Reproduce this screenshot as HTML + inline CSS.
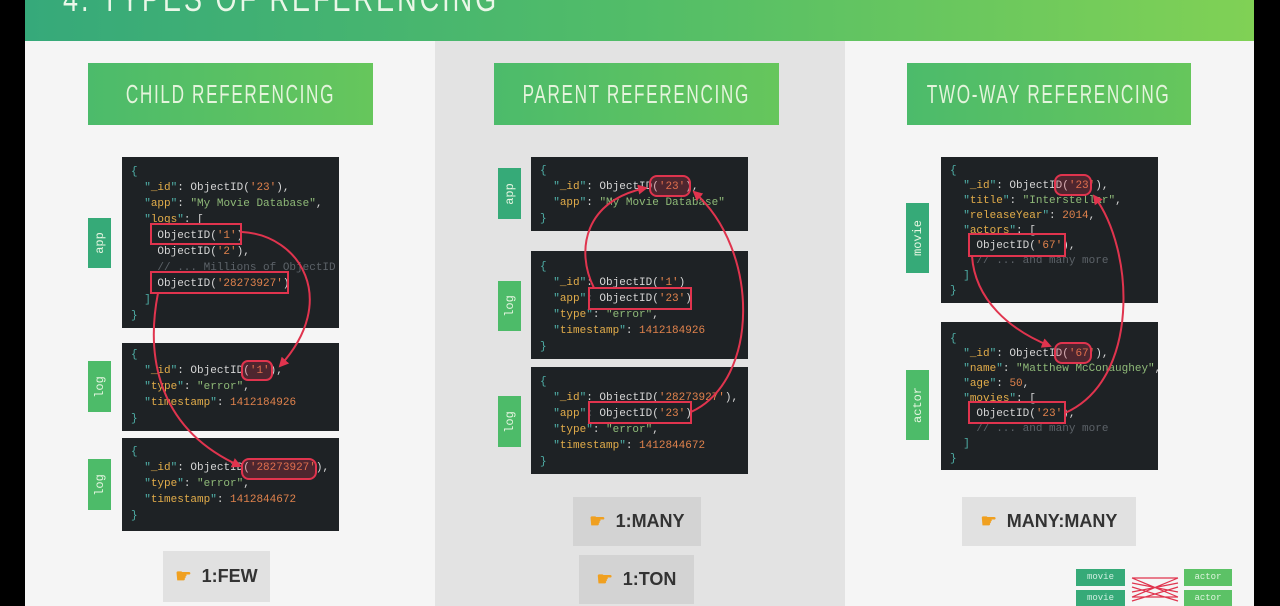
<!DOCTYPE html>
<html><head><meta charset="utf-8"><style>
*{margin:0;padding:0;box-sizing:border-box}
body{width:1280px;height:606px;overflow:hidden;background:#000;position:relative;font-family:"Liberation Sans",sans-serif}
.a{position:absolute}
.hdr{left:25px;top:0;width:1229px;height:41px;background:linear-gradient(90deg,#36a97a,#52bd68 50%,#80d155)}
.hdr span{position:absolute;left:38px;top:-22px;font-size:36px;color:#eaf7e8;letter-spacing:4px;transform:scaleX(.75);transform-origin:left;white-space:nowrap}
.p{top:41px;height:565px}
.t{height:62px;background:linear-gradient(90deg,#4cbb6b,#66c65c);color:#e4f4dc;font-size:26px;display:flex;align-items:center;justify-content:center;white-space:nowrap}
.t span{display:inline-block;transform:scaleX(.66);letter-spacing:2.5px}
.c{background:#1e2225;font-family:"Liberation Mono",monospace;font-size:11px;color:#d6d6d6;padding-left:9px}
.c div{height:16px;line-height:16px;white-space:pre}
.c.r div{height:15px;line-height:15px}
.k{color:#e3ad4a}.q{color:#4fb0a8}.s{color:#8fba78}.n{color:#e0824c}.m{color:#5c6268}
.tag{width:23px;color:#e8f6e2;font-family:"Liberation Mono",monospace;font-size:12px;display:flex;align-items:center;justify-content:center}
.tag span{transform:rotate(-90deg);white-space:nowrap}
.g1{background:#36aa78}.g2{background:#4dbb69}
.b{font-size:18px;font-weight:bold;color:#333;display:flex;align-items:center;justify-content:center;gap:10px}
.b i{font-style:normal;color:#f0a020;font-size:18px}
</style></head><body>
<div class="a hdr"><span>4. TYPES OF REFERENCING</span></div>
<div class="a p" style="left:25px;width:410px;background:#f5f5f5"></div>
<div class="a p" style="left:435px;width:410px;background:#e3e3e3"></div>
<div class="a p" style="left:845px;width:409px;background:#f5f5f5"></div>

<div class="a t" style="left:88px;top:63px;width:285px"><span>CHILD REFERENCING</span></div>
<div class="a t" style="left:494px;top:63px;width:285px"><span>PARENT REFERENCING</span></div>
<div class="a t" style="left:907px;top:63px;width:284px"><span>TWO-WAY REFERENCING</span></div>

<!-- left -->
<div class="a c" style="left:122px;top:157px;width:217px;height:171px;padding-top:7px"><div class="q">{</div><div>  <span class="q">"</span><span class="k">_id</span><span class="q">"</span>: ObjectID(<span class="n">'23'</span>),</div><div>  <span class="q">"</span><span class="k">app</span><span class="q">"</span>: <span class="s">"My Movie Database"</span>,</div><div>  <span class="q">"</span><span class="k">logs</span><span class="q">"</span>: [</div><div>    ObjectID(<span class="n">'1'</span>)</div><div>    ObjectID(<span class="n">'2'</span>),</div><div class="m">    // ... Millions of ObjectID</div><div>    ObjectID(<span class="n">'28273927'</span>)</div><div class="q">  ]</div><div class="q">}</div></div>
<div class="a c" style="left:122px;top:343px;width:217px;height:88px;padding-top:4px"><div class="q">{</div><div>  <span class="q">"</span><span class="k">_id</span><span class="q">"</span>: ObjectID(<span class="n">'1'</span>),</div><div>  <span class="q">"</span><span class="k">type</span><span class="q">"</span>: <span class="s">"error"</span>,</div><div>  <span class="q">"</span><span class="k">timestamp</span><span class="q">"</span>: <span class="n">1412184926</span></div><div class="q">}</div></div>
<div class="a c" style="left:122px;top:438px;width:217px;height:93px;padding-top:6px"><div class="q">{</div><div>  <span class="q">"</span><span class="k">_id</span><span class="q">"</span>: ObjectID(<span class="n">'28273927'</span>),</div><div>  <span class="q">"</span><span class="k">type</span><span class="q">"</span>: <span class="s">"error"</span>,</div><div>  <span class="q">"</span><span class="k">timestamp</span><span class="q">"</span>: <span class="n">1412844672</span></div><div class="q">}</div></div>
<div class="a tag g1" style="left:88px;top:218px;height:50px"><span>app</span></div>
<div class="a tag g2" style="left:88px;top:361px;height:51px"><span>log</span></div>
<div class="a tag g2" style="left:88px;top:459px;height:51px"><span>log</span></div>
<div class="a b" style="left:163px;top:551px;width:107px;height:51px;background:#e1e1e1"><i>☛</i>1:FEW</div>

<!-- middle -->
<div class="a c" style="left:531px;top:157px;width:217px;height:74px;padding-top:6px"><div class="q">{</div><div>  <span class="q">"</span><span class="k">_id</span><span class="q">"</span>: ObjectID(<span class="n">'23'</span>),</div><div>  <span class="q">"</span><span class="k">app</span><span class="q">"</span>: <span class="s">"My Movie Database"</span></div><div class="q">}</div></div>
<div class="a c" style="left:531px;top:251px;width:217px;height:108px;padding-top:8px"><div class="q">{</div><div>  <span class="q">"</span><span class="k">_id</span><span class="q">"</span>: ObjectID(<span class="n">'1'</span>)</div><div>  <span class="q">"</span><span class="k">app</span><span class="q">"</span>: ObjectID(<span class="n">'23'</span>)</div><div>  <span class="q">"</span><span class="k">type</span><span class="q">"</span>: <span class="s">"error"</span>,</div><div>  <span class="q">"</span><span class="k">timestamp</span><span class="q">"</span>: <span class="n">1412184926</span></div><div class="q">}</div></div>
<div class="a c" style="left:531px;top:367px;width:217px;height:107px;padding-top:7px"><div class="q">{</div><div>  <span class="q">"</span><span class="k">_id</span><span class="q">"</span>: ObjectID(<span class="n">'28273927'</span>),</div><div>  <span class="q">"</span><span class="k">app</span><span class="q">"</span>: ObjectID(<span class="n">'23'</span>)</div><div>  <span class="q">"</span><span class="k">type</span><span class="q">"</span>: <span class="s">"error"</span>,</div><div>  <span class="q">"</span><span class="k">timestamp</span><span class="q">"</span>: <span class="n">1412844672</span></div><div class="q">}</div></div>
<div class="a tag g1" style="left:498px;top:168px;height:51px"><span>app</span></div>
<div class="a tag g2" style="left:498px;top:281px;height:50px"><span>log</span></div>
<div class="a tag g2" style="left:498px;top:396px;height:51px"><span>log</span></div>
<div class="a b" style="left:573px;top:497px;width:128px;height:49px;background:#d3d3d3"><i>☛</i>1:MANY</div>
<div class="a b" style="left:579px;top:555px;width:115px;height:49px;background:#d3d3d3"><i>☛</i>1:TON</div>

<!-- right -->
<div class="a c r" style="left:941px;top:157px;width:217px;height:146px;padding-top:7px"><div class="q">{</div><div>  <span class="q">"</span><span class="k">_id</span><span class="q">"</span>: ObjectID(<span class="n">'23'</span>),</div><div>  <span class="q">"</span><span class="k">title</span><span class="q">"</span>: <span class="s">"Interstellar"</span>,</div><div>  <span class="q">"</span><span class="k">releaseYear</span><span class="q">"</span>: <span class="n">2014</span>,</div><div>  <span class="q">"</span><span class="k">actors</span><span class="q">"</span>: [</div><div>    ObjectID(<span class="n">'67'</span>),</div><div class="m">    // ... and many more</div><div class="q">  ]</div><div class="q">}</div></div>
<div class="a c r" style="left:941px;top:322px;width:217px;height:148px;padding-top:10px"><div class="q">{</div><div>  <span class="q">"</span><span class="k">_id</span><span class="q">"</span>: ObjectID(<span class="n">'67'</span>),</div><div>  <span class="q">"</span><span class="k">name</span><span class="q">"</span>: <span class="s">"Matthew McConaughey"</span>,</div><div>  <span class="q">"</span><span class="k">age</span><span class="q">"</span>: <span class="n">50</span>,</div><div>  <span class="q">"</span><span class="k">movies</span><span class="q">"</span>: [</div><div>    ObjectID(<span class="n">'23'</span>),</div><div class="m">    // ... and many more</div><div class="q">  ]</div><div class="q">}</div></div>
<div class="a tag g1" style="left:906px;top:203px;height:70px"><span>movie</span></div>
<div class="a tag g2" style="left:906px;top:370px;height:70px"><span>actor</span></div>
<div class="a b" style="left:962px;top:497px;width:174px;height:49px;background:#e1e1e1"><i>☛</i>MANY:MANY</div>

<div class="a" style="left:1076px;top:569px;width:49px;height:17px;background:#36aa78;color:#cfeee0;font:9px 'Liberation Mono',monospace;text-align:center;line-height:17px">movie</div>
<div class="a" style="left:1076px;top:590px;width:49px;height:16px;background:#36aa78;color:#cfeee0;font:9px 'Liberation Mono',monospace;text-align:center;line-height:16px">movie</div>
<div class="a" style="left:1184px;top:569px;width:48px;height:17px;background:#5cc266;color:#dff5df;font:9px 'Liberation Mono',monospace;text-align:center;line-height:17px">actor</div>
<div class="a" style="left:1184px;top:590px;width:48px;height:16px;background:#5cc266;color:#dff5df;font:9px 'Liberation Mono',monospace;text-align:center;line-height:16px">actor</div>

<svg class="a" style="left:0;top:0" width="1280" height="606" fill="none" stroke="#e0344e" stroke-width="2">
<defs><marker id="ar" viewBox="0 0 10 10" refX="8" refY="5" markerWidth="5" markerHeight="5" orient="auto"><path d="M0 0L10 5L0 10z" fill="#e0344e" stroke="none"/></marker></defs>
<rect x="151" y="224" width="90" height="20"/>
<rect x="151" y="272" width="137" height="21"/>
<rect x="242" y="361" width="30" height="19" rx="6" fill="rgba(224,52,78,.25)"/>
<rect x="242" y="459" width="74" height="20" rx="7" fill="rgba(224,52,78,.25)"/>
<path d="M242 232C300 235 340 300 280 366" marker-end="url(#ar)"/>
<path d="M158 293C145 360 160 430 240 466" marker-end="url(#ar)"/>
<rect x="589" y="288" width="102" height="21"/>
<rect x="589" y="402" width="102" height="21"/>
<rect x="650" y="176" width="40" height="20" rx="7" fill="rgba(224,52,78,.25)"/>
<path d="M594 288C575 250 585 200 646 188" marker-end="url(#ar)"/>
<path d="M691 412C760 380 760 250 694 192" marker-end="url(#ar)"/>
<rect x="969" y="234" width="96" height="22"/>
<rect x="969" y="402" width="96" height="21"/>
<rect x="1055" y="175" width="36" height="20" rx="7" fill="rgba(224,52,78,.25)"/>
<rect x="1055" y="343" width="36" height="20" rx="7" fill="rgba(224,52,78,.25)"/>
<path d="M972 256C975 300 1010 330 1050 346" marker-end="url(#ar)"/>
<path d="M1065 413C1140 380 1135 250 1094 196" marker-end="url(#ar)"/>
<g stroke-width="1.2">
<path d="M1132 578H1178M1132 597H1178M1132 578L1178 597M1132 597L1178 578M1132 583L1178 592M1132 592L1178 583M1132 587L1178 601M1132 601L1178 587"/>
</g>
</svg>
</body></html>
